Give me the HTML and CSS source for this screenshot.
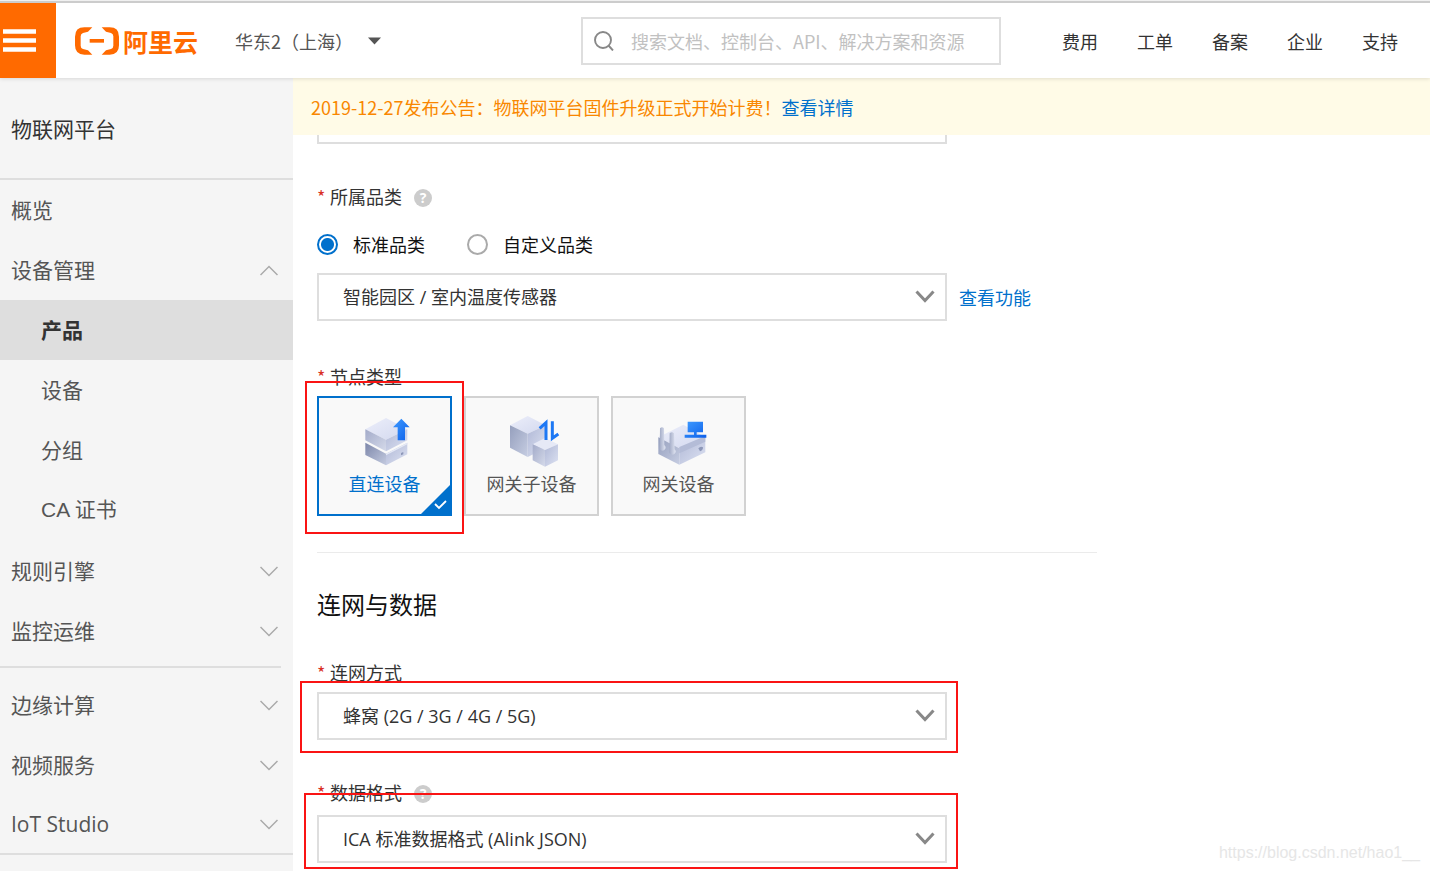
FILE: index.html
```html
<!DOCTYPE html>
<html lang="zh-CN">
<head>
<meta charset="utf-8">
<title>物联网平台</title>
<link rel="stylesheet" href="styles.css">
</head>
<body>
<header class="topbar">
  <button class="burger" type="button" aria-label="菜单">
    <svg width="33" height="23" viewBox="0 0 33 23"><path d="M0 2.5H33M0 11.5H33M0 20.5H33" stroke="#fff" stroke-width="4.4"/></svg>
  </button>
  <a class="logo" href="#">
    <svg width="44" height="28" viewBox="225 83 132 84" fill="#ff6a00">
      <path d="M277 84H253Q225 84 225 112V138Q225 166 253 166H277L264 153L249 149Q242 147 242 139V111Q242 103 249 101L264 97Z"/>
      <path d="M305 84H329Q357 84 357 112V138Q357 166 329 166H305L318 153L333 149Q340 147 340 139V111Q340 103 333 101L318 97Z"/>
      <path d="M269 119H312V130H269Z"/>
    </svg>
    <span>阿里云</span>
  </a>
  <button class="region" type="button">华东2（上海）
    <svg width="13" height="8" viewBox="0 0 13 8"><path d="M0 0.5H13L6.500 7.500Z" fill="#555"/></svg>
  </button>
  <label class="search">
    <svg width="20" height="20" viewBox="0 0 20 20" fill="none" stroke="#888" stroke-width="1.900"><circle cx="9" cy="9" r="8"/><path d="M14.500 14.500L19 19.500"/></svg>
    <input type="text" aria-label="搜索" placeholder="搜索文档、控制台、API、解决方案和资源">
  </label>
  <nav class="topnav">
    <a href="#">费用</a><a href="#">工单</a><a href="#">备案</a><a href="#">企业</a><a href="#">支持</a>
  </nav>
</header>
<div class="layout">
  <nav class="sidebar">
    <h1 class="side-title">物联网平台</h1>
    <a class="item" href="#">概览</a>
    <button class="item" type="button">设备管理<svg class="chev" viewBox="0 0 18 11"><path d="M0.500 10L9 1.500L17.500 10"/></svg></button>
    <div class="sub">
      <a class="item active" href="#">产品</a>
      <a class="item" href="#">设备</a>
      <a class="item" href="#">分组</a>
      <a class="item latin" href="#">CA 证书</a>
    </div>
    <button class="item" type="button">规则引擎<svg class="chev" viewBox="0 0 18 11"><path d="M0.500 1L9 9.500L17.500 1"/></svg></button>
    <button class="item" type="button">监控运维<svg class="chev" viewBox="0 0 18 11"><path d="M0.500 1L9 9.500L17.500 1"/></svg></button>
    <hr class="side-rule">
    <button class="item" type="button">边缘计算<svg class="chev" viewBox="0 0 18 11"><path d="M0.500 1L9 9.500L17.500 1"/></svg></button>
    <button class="item" type="button">视频服务<svg class="chev" viewBox="0 0 18 11"><path d="M0.500 1L9 9.500L17.500 1"/></svg></button>
    <button class="item last" type="button">IoT Studio<svg class="chev" viewBox="0 0 18 11"><path d="M0.500 1L9 9.500L17.500 1"/></svg></button>
  </nav>
  <main class="main">
    <p class="notice">2019-12-27发布公告：物联网平台固件升级正式开始计费！<a href="#">查看详情</a></p>
    <form class="form">
      <div class="scrolled"><input class="box" type="text" aria-label="产品名称"></div>

      <section class="field">
        <div class="label"><span class="req">*</span><label for="category">所属品类</label><button class="help" type="button" aria-label="帮助">?</button></div>
        <div class="radios">
          <label><input type="radio" name="kind" checked>标准品类</label>
          <label><input type="radio" name="kind">自定义品类</label>
        </div>
        <div class="row">
          <div class="select">
            <select class="box" id="category"><option>智能园区 / 室内温度传感器</option></select>
            <svg class="arrow" viewBox="0 0 20 13"><path d="M1.500 1.500L10 10.500L18.500 1.500"/></svg>
          </div>
          <a href="#">查看功能</a>
        </div>
      </section>

      <section class="field node-type">
        <div class="label"><span class="req">*</span><span>节点类型</span></div>
        <div class="cards">
          <div class="marked">
          <button class="card selected" type="button" aria-pressed="true">
            <svg class="pic" viewBox="164 117 180 162">
              <defs>
                <linearGradient id="top" x1="0" y1="0" x2="1" y2="1"><stop offset="0" stop-color="#eceefa"/><stop offset="1" stop-color="#d3d9ef"/></linearGradient>
                <linearGradient id="left" x1="0" y1="0" x2="1" y2="1"><stop offset="0" stop-color="#a3abc9"/><stop offset="1" stop-color="#d5daea"/></linearGradient>
                <linearGradient id="right" x1="0" y1="0" x2="1" y2="1"><stop offset="0" stop-color="#b0b8d6"/><stop offset="1" stop-color="#dde2f2"/></linearGradient>
                <linearGradient id="dark" x1="0" y1="0" x2="1" y2="1"><stop offset="0" stop-color="#7d87aa"/><stop offset="1" stop-color="#c3cadf"/></linearGradient>
                <linearGradient id="side" x1="0" y1="0" x2="1" y2="1"><stop offset="0" stop-color="#959fbd"/><stop offset="1" stop-color="#c6cde2"/></linearGradient>
                <linearGradient id="rod" x1="0" y1="0" x2="1" y2="0"><stop offset="0" stop-color="#a2abc6"/><stop offset="1" stop-color="#e2e6f3"/></linearGradient>
                <linearGradient id="blue" x1="0" y1="0" x2="1" y2="1"><stop offset="0" stop-color="#3f9bff"/><stop offset="1" stop-color="#0c5fea"/></linearGradient>
              </defs>
              <path fill="url(#dark)" d="M195 203L257 236V271L195 240Z"/>
              <path fill="url(#right)" d="M257 236L321 203V238L257 271Z"/>
              <path fill="#e5e9f5" d="M257 236L321 203V208L257 241Z"/>
              <path fill="#8d97b8" d="M302 234L309 231V238L302 241Z"/>
              <path fill="url(#top)" d="M195 163L257 129L321 163L257 194Z"/>
              <path fill="url(#left)" d="M195 163L257 194V229L195 196Z"/>
              <path fill="url(#right)" d="M257 194L321 163V196L257 229Z"/>
              <path fill="url(#blue)" d="M303 131L328 157H314V196H292V157H278Z"/>
            </svg>
            <span>直连设备</span>
            <svg class="tick" viewBox="0 0 29 29"><path d="M29 0V29H0Z" fill="#0070cc"/><path d="M14 19L18 23L25 16" fill="none" stroke="#fff" stroke-width="1.800"/></svg>
          </button>
          <i class="mark mark-card"></i>
          </div>
          <button class="card" type="button" aria-pressed="false">
            <svg class="pic" viewBox="124 87 180 162">
              <path fill="url(#top)" d="M148 121L201 93L255 121L201 146Z"/>
              <path fill="url(#side)" d="M148 121L201 146V216L148 188Z"/>
              <path fill="url(#right)" d="M201 146L255 121V190L201 216Z"/>
              <path fill="#e6e9f6" d="M216 178L253 159L292 178L253 195Z"/>
              <path fill="url(#left)" d="M216 178L253 195V245L216 226Z"/>
              <path fill="url(#right)" d="M253 195L292 178V226L253 245Z"/>
              <path fill="none" stroke="#1d78f4" stroke-width="9" d="M237 130L256 113V165M275 109V160L293 147"/>
            </svg>
            <span>网关子设备</span>
          </button>
          <button class="card" type="button" aria-pressed="false">
            <svg class="pic" viewBox="566 87 180 162">
              <path fill="url(#top)" d="M594 157L669 119L735 157L657 190Z"/>
              <path fill="url(#side)" d="M594 157L657 190V239L594 207Z"/>
              <path fill="url(#right)" d="M657 190L735 157V202L657 239Z"/>
              <path fill="#b4bcd7" d="M657 186L735 153V170L657 205Z"/>
              <path fill="#8d97b8" d="M714 190Q721 182 728 187Q728 196 719 199Z"/>
              <path fill="url(#rod)" d="M599 130Q605 124 611 130L612 180Q620 188 611 196Q604 200 598 193Z"/>
              <path fill="url(#rod)" d="M628 145Q635 139 641 145L643 193Q650 200 642 207Q634 212 627 204Z"/>
              <path fill="url(#blue)" d="M682 110H728V142H709V149H738V158H673V149H701V142H682Z"/>
            </svg>
            <span>网关设备</span>
          </button>
        </div>
      </section>

      <hr class="divider">
      <h2 class="section-title">连网与数据</h2>

      <section class="field">
        <div class="label"><span class="req">*</span><label for="network">连网方式</label></div>
        <div class="select">
          <select class="box" id="network"><option>蜂窝 (2G / 3G / 4G / 5G)</option></select>
          <svg class="arrow" viewBox="0 0 20 13"><path d="M1.500 1.500L10 10.500L18.500 1.500"/></svg>
          <i class="mark mark-network"></i>
        </div>
      </section>

      <section class="field data-format">
        <div class="label"><span class="req">*</span><label for="format">数据格式</label><button class="help" type="button" aria-label="帮助">?</button></div>
        <div class="select">
          <select class="box" id="format"><option>ICA 标准数据格式 (Alink JSON)</option></select>
          <svg class="arrow" viewBox="0 0 20 13"><path d="M1.500 1.500L10 10.500L18.500 1.500"/></svg>
          <i class="mark mark-format"></i>
        </div>
      </section>
    </form>
    <span class="watermark">https://blog.csdn.net/hao1__</span>
  </main>
</div>
</body>
</html>
```

FILE: styles.css
```css
* { box-sizing: border-box; }
body {
  margin: 0;
  min-height: 100vh;
  display: flex;
  flex-direction: column;
  border-top: 1px solid #f0f0f0;
  background: #fff;
  color: #333;
  font: 18px/24px "Noto Sans CJK SC", sans-serif;
}
button, input, select { font: inherit; color: inherit; }
button { border: 0; background: none; padding: 0; cursor: pointer; }
a { color: #0070cc; text-decoration: none; }
h1, h2, p { margin: 0; font-weight: 400; }

.topbar {
  position: relative;
  z-index: 1;
  display: flex;
  align-items: center;
  height: 77px;
  border-top: 2px solid #ccc;
  background: #fff;
  box-shadow: 0 1px 4px rgba(0, 0, 0, 0.12);
}
.burger {
  width: 56px;
  align-self: stretch;
  display: flex;
  align-items: center;
  padding-left: 3px;
  background: #ff6a00;
}
.logo {
  display: flex;
  align-items: center;
  gap: 4px;
  margin-left: 19px;
  color: #ff6a00;
  font-size: 25px;
  font-weight: 700;
}
.region {
  display: flex;
  align-items: center;
  gap: 15px;
  margin-left: 37px;
  color: #555;
}
.search {
  display: flex;
  align-items: center;
  gap: 17px;
  width: 420px;
  height: 48px;
  margin-left: auto;
  padding: 0 11px;
  border: 2px solid #dedede;
}
.search svg { flex: none; }
.search input { flex: 1; min-width: 0; border: 0; outline: 0; padding: 0; background: none; }
.search input::placeholder { color: #c1c1c1; opacity: 1; }
.topnav { display: flex; gap: 39px; margin: 0 32px 0 61px; }
.topnav a { color: #333; }

.layout { flex: 1; display: flex; }
.sidebar {
  width: 293px;
  flex: none;
  background: #f5f5f5;
  color: #555;
  font-size: 21px;
}
.side-title {
  display: flex;
  align-items: center;
  height: 102px;
  padding-left: 11px;
  border-bottom: 2px solid #dedede;
  color: #333;
  font-size: 21px;
}
.item {
  display: flex;
  align-items: center;
  justify-content: space-between;
  width: 100%;
  height: 60px;
  padding: 0 15px 0 11px;
  color: #555;
  font-family: "Open Sans", "Noto Sans CJK SC", sans-serif;
}
.chev { width: 18px; height: 11px; fill: none; stroke: #aaa; stroke-width: 1.500; }
.sub { padding-bottom: 1px; }
.sub .item { padding-left: 41px; }
.sub .active { background: #dedede; color: #333; font-weight: 700; }
.sub .latin { font-family: "Liberation Sans", "Noto Sans CJK SC", sans-serif; }
.side-rule { margin: 5px 12px 7px 0; border: 0; border-top: 2px solid #dedede; }
.last { border-bottom: 2px solid #dedede; }

.main { flex: 1; min-width: 0; position: relative; }
.notice {
  padding: 17px 18px 16px;
  background: #fffbe7;
  color: #f98700;
}
.form { padding-left: 24px; }
.box {
  display: block;
  width: 100%;
  height: 48px;
  padding: 0 24px;
  border: 2px solid #dedede;
  border-radius: 0;
  background: #fff;
  appearance: none;
  font-family: "Open Sans", "Noto Sans CJK SC", sans-serif;
}
.scrolled {
  display: flex;
  align-items: flex-end;
  max-width: 630px;
  height: 9px;
  overflow: hidden;
}
.field { padding-top: 40px; }
.node-type { padding-top: 43px; }
.label { display: flex; align-items: center; margin-bottom: 8px; }
.data-format .label { margin-bottom: 11px; }
.req { width: 13px; color: #d93026; }
.help {
  width: 18px;
  height: 18px;
  margin: 3px 0 0 12px;
  border-radius: 50%;
  background: #ccc;
  color: #fff;
  font: 700 14px/18px "Open Sans", sans-serif;
}
.radios { display: flex; gap: 42px; padding: 16px 0 17px; color: #111; }
.radios label { display: flex; align-items: center; gap: 15px; }
.radios input {
  width: 21px;
  height: 21px;
  margin: 0;
  appearance: none;
  border: 2px solid #aaa;
  border-radius: 50%;
}
.radios input:checked {
  border-color: #0070cc;
  background: radial-gradient(circle, #0070cc 6px, #fff 7px);
}
.row { display: flex; align-items: center; gap: 12px; }
.select { position: relative; width: 630px; }
.arrow {
  position: absolute;
  right: 12px;
  top: 17px;
  width: 20px;
  height: 13px;
  fill: none;
  stroke: #888;
  stroke-width: 3;
  pointer-events: none;
}
.cards { display: flex; gap: 12px; }
.marked { position: relative; }
.card {
  position: relative;
  display: flex;
  flex-direction: column;
  align-items: center;
  gap: 3px;
  width: 135px;
  height: 120px;
  padding-top: 16px;
  border: 2px solid #d2d2d2;
  background: #f9f9f9;
  color: #555;
}
.selected { border-color: #0070cc; color: #0070cc; }
.pic { width: 60px; height: 54px; }
.tick { position: absolute; right: 0; bottom: 0; width: 29px; height: 29px; }
.divider { max-width: 780px; margin: 36px 0 0; border: 0; border-top: 1px solid #ebebeb; }
.section-title { margin-top: 35px; color: #111; font-size: 24px; line-height: 32px; }

.mark { position: absolute; border: 2px solid #fa1414; pointer-events: none; }
.mark-card { inset: -15px -12px -18px; }
.mark-network { inset: -11px -11px -13px -17px; }
.mark-format { inset: -22px -11px -6px -13px; }
.watermark {
  position: absolute;
  right: 10px;
  bottom: 6px;
  color: #e6e6e6;
  font: 16px/24px "Liberation Sans", sans-serif;
}
```
